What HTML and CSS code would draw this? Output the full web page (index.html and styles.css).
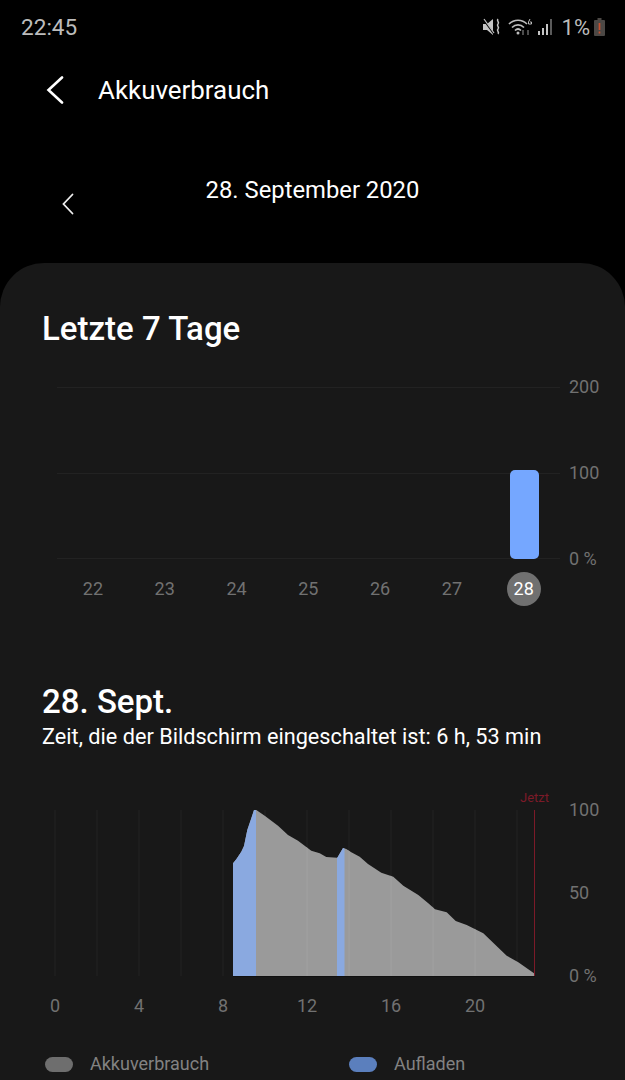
FILE: index.html
```html
<!DOCTYPE html>
<html lang="de">
<head>
  <meta charset="UTF-8">
  <meta name="viewport" content="width=device-width, initial-scale=1.0">
  <title>Akkuverbrauch</title>
  <link rel="stylesheet" href="styles.css">
</head>
<body>
  <div class="status-bar">
    <span class="clock">22:45</span>
    <div class="status-icons">
      <svg class="icon-mute" viewBox="0 0 18 18" width="18" height="18">
        <path d="M0 6h4l6-5v16l-6-5H0z" fill="#c4c4c4"/>
        <path d="M0 1l11 15" stroke="#000" stroke-width="1.6"/>
        <path d="M1 1l10 14" stroke="#c4c4c4" stroke-width="1.2"/>
        <path d="M15 1c-2 2 2 3 0 5s2 3 0 5 2 3 0 5" fill="none" stroke="#c4c4c4" stroke-width="1.5"/>
      </svg>
      <svg class="icon-wifi" viewBox="0 0 25 18" width="25" height="18">
        <path d="M1 6c5-5 13-5 18 0M4 9.500c3.500-3.500 8.500-3.500 12 0M7 12.500c2-2 4-2 6 0" fill="none" stroke="#bdbdbd" stroke-width="1.700"/>
        <circle cx="10" cy="15" r="1.500" fill="#bdbdbd"/>
        <path d="M22 1l-1.500 3v2h3V4h-1.500" fill="none" stroke="#bdbdbd" stroke-width="1"/>
        <path d="M15 12v5M20 17v-5" stroke="#666" stroke-width="1.500"/>
      </svg>
      <svg class="icon-signal" viewBox="0 0 15 16" width="15" height="16">
        <rect x="0" y="12" width="2" height="4" fill="#c4c4c4"/>
        <rect x="4" y="9" width="2" height="7" fill="#c4c4c4"/>
        <rect x="8" y="5" width="2" height="11" fill="#c4c4c4"/>
        <rect x="12" y="0" width="2" height="16" fill="#5a5a5a"/>
      </svg>
      <span class="battery-text">1%</span>
      <svg class="icon-battery" viewBox="0 0 11 18" width="11" height="18">
        <path d="M3.500 0h4v2H10a1 1 0 0 1 1 1v14a1 1 0 0 1-1 1H1a1 1 0 0 1-1-1V3a1 1 0 0 1 1-1h2.500z" fill="#4c4845"/>
        <path d="M5.500 5v7M5.500 13.500v2" stroke="#c9502f" stroke-width="1.700"/>
      </svg>
    </div>
  </div>

  <header class="app-bar">
    <svg class="back" viewBox="0 0 18 28" width="18" height="28">
      <path d="M16 1.500L2.500 14 16 26.500" fill="none" stroke="#fff" stroke-width="2.600" stroke-linecap="round"/>
    </svg>
    <h1 class="app-title">Akkuverbrauch</h1>
  </header>

  <div class="date-row">
    <svg class="date-prev" viewBox="0 0 12 22" width="12" height="22">
      <path d="M10.500 1.500L1.500 11l9 9.500" fill="none" stroke="#eee" stroke-width="1.800" stroke-linecap="round"/>
    </svg>
    <div class="date-label">28. September 2020</div>
  </div>

  <main class="card">
    <h2 class="card-title">Letzte 7 Tage</h2>

    <div class="week-chart">
      <svg class="week-plot" viewBox="0 0 503 176" width="503" height="176">
        <path d="M0 .5h503M0 86.500h503M0 171.500h503" stroke="#222" stroke-width="1"/>
        <rect x="453" y="83" width="29" height="89" rx="5" fill="#75a7ff"/>
      </svg>
      <div class="y-axis week-y">
        <span>200</span>
        <span>100</span>
        <span>0 %</span>
      </div>
    </div>
    <div class="week-days">
      <span>22</span>
      <span>23</span>
      <span>24</span>
      <span>25</span>
      <span>26</span>
      <span>27</span>
      <span class="today">28</span>
    </div>

    <h2 class="day-title">28. Sept.</h2>
    <p class="screen-time">Zeit, die der Bildschirm eingeschaltet ist: 6 h, 53 min</p>

    <div class="now-label">Jetzt</div>
    <div class="day-chart">
      <svg class="day-plot" viewBox="0 0 533 170" width="533" height="170">
        <defs>
          <clipPath id="area-clip">
            <path d="M220 169V56.300L223.300 52.300 228.300 44.700 231 39 234.300 23 238.300 11.300 241 3H243.300L251.700 8.700 265 18.700 275 28 285 33.700 298.300 43.700 306.700 46.300 313.300 50 324.300 50.700 330 41 333.300 42 338.300 45.300 346.700 49.700 355 57 368.300 65.700 380.300 69.700 390.300 78.700 405.300 88 415.300 96.300 422 102.300 433.700 105.300 442.700 114 453.700 118 470.300 126.300 493.700 148.700 505.300 155.300 521 166.300V169Z"/>
          </clipPath>
        </defs>
        <path d="M42 3v166M84 3v166M126 3v166M168 3v166M210 3v166M252 3v166M294 3v166M336 3v166M378 3v166M420 3v166M462 3v166M504 3v166M546 3v166" stroke="#222" stroke-width="1"/>
        <rect x="0" y="0" width="533" height="170" fill="#9a9a9a" clip-path="url(#area-clip)"/>
        <g clip-path="url(#area-clip)" fill="#8aa9e0">
          <rect x="220" y="0" width="23" height="170"/>
          <rect x="324" y="0" width="7.500" height="170"/>
        </g>
        <path d="M294 3v166M336 3v166M378 3v166M420 3v166M462 3v166" stroke="#a1a1a1" stroke-width="1" clip-path="url(#area-clip)"/>
        <path d="M521.500 3v166" stroke="#7c1a28" stroke-width="1"/>
        <path d="M220 169.500h302" stroke="#101010" stroke-width="1"/>
      </svg>
      <div class="y-axis day-y">
        <span>100</span>
        <span>50</span>
        <span>0 %</span>
      </div>
    </div>
    <div class="hours">
      <span>0</span>
      <span>4</span>
      <span>8</span>
      <span>12</span>
      <span>16</span>
      <span>20</span>
    </div>

    <div class="legend">
      <div class="legend-item">
        <span class="swatch swatch-usage"></span>
        <span>Akkuverbrauch</span>
      </div>
      <div class="legend-item">
        <span class="swatch swatch-charge"></span>
        <span>Aufladen</span>
      </div>
    </div>
  </main>
</body>
</html>
```

FILE: styles.css
```css
html, body {
  margin: 0;
  height: 1080px;
  overflow: hidden;
  background-color: #000;
  font-family: Roboto, "Noto Sans", sans-serif;
}

.status-bar {
  height: 54px;
  display: flex;
  justify-content: space-between;
  align-items: center;
  padding: 0 20px 0 21px;
  color: #bcbcbc;
}

.clock {
  font-size: 22.600px;
}

.status-icons {
  display: flex;
  align-items: center;
}

.icon-mute {
  margin-right: 7px;
}

.icon-wifi {
  margin-right: 5px;
}

.icon-signal {
  margin-right: 9px;
}

.battery-text {
  font-size: 22px;
  margin-right: 4px;
}

.app-bar {
  height: 72px;
  display: flex;
  align-items: center;
  padding-left: 46px;
}

.back {
  margin-right: 34px;
}

.app-title {
  margin: 0;
  font-size: 25.900px;
  font-weight: 400;
  color: #fff;
}

.date-row {
  position: relative;
  height: 137px;
  color: #fff;
}

.date-prev {
  position: absolute;
  left: 62px;
  top: 67px;
}

.date-label {
  padding-top: 51px;
  text-align: center;
  font-size: 23.800px;
  line-height: 26px;
}

.card {
  height: 817px;
  box-sizing: border-box;
  padding-top: 47px;
  background-color: #181818;
  border-radius: 44px 44px 0 0;
}

.card-title,
.day-title {
  margin: 0 0 0 42px;
  font-size: 33px;
  line-height: 38px;
  font-weight: 500;
  color: #fff;
}

.week-chart {
  display: flex;
  margin: 39px 0 0 57px;
}

.week-plot {
  display: block;
}

.y-axis {
  display: flex;
  flex-direction: column;
  justify-content: space-between;
  margin-left: 9px;
  font-size: 18px;
  line-height: 22px;
  color: #717171;
}

.week-y {
  height: 194px;
  margin-top: -11px;
}

.week-days {
  display: grid;
  grid-template-columns: repeat(7, 71.800px);
  margin: 2px 0 0 57px;
  font-size: 18px;
  line-height: 34px;
  text-align: center;
  color: #717171;
}

.today {
  justify-self: center;
  width: 34px;
  height: 34px;
  border-radius: 50%;
  background-color: #707070;
  color: #fff;
}

.day-title {
  margin-top: 77px;
}

.screen-time {
  margin: 3px 0 0 42px;
  font-size: 21.700px;
  line-height: 26px;
  color: #fff;
}

.now-label {
  margin: 40px 0 0 520px;
  font-size: 13px;
  line-height: 16px;
  color: #7c1a28;
}

.day-chart {
  display: flex;
  margin: 1px 0 0 13px;
}

.day-plot {
  display: block;
}

.day-y {
  height: 188px;
  margin: -8px 0 0 23px;
}

.hours {
  display: grid;
  grid-template-columns: repeat(6, 84px);
  margin: 8px 0 0 13px;
  font-size: 18px;
  line-height: 22px;
  text-align: center;
  color: #717171;
}

.legend {
  display: flex;
  margin: 36px 0 0 45px;
  font-size: 18px;
  line-height: 22px;
  color: #828282;
}

.legend-item {
  flex: none;
  width: 304px;
  display: flex;
  align-items: center;
  gap: 17px;
}

.swatch {
  width: 28px;
  height: 15px;
  border-radius: 8px;
}

.swatch-usage {
  background-color: #6e6e6e;
}

.swatch-charge {
  background-color: #5b7fbd;
}
```
